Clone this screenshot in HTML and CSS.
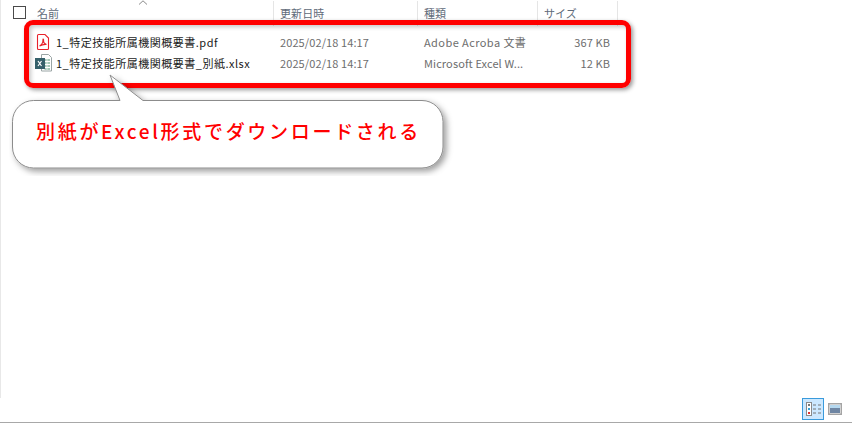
FILE: index.html
```html
<!DOCTYPE html>
<html lang="ja">
<head>
<meta charset="utf-8">
<title>エクスプローラー</title>
<link rel="stylesheet" href="styles.css">
</head>
<body>
<div class="window">
  <div class="pane">
    <div class="header">
      <div class="hcell name"><span class="check"></span><span class="hname">名前</span></div>
      <div class="hcell">更新日時</div>
      <div class="hcell">種類</div>
      <div class="hcell">サイズ</div>
    </div>
    <div class="rows">
      <div class="row">
        <div class="fname">
          <svg class="ico" width="17" height="18" viewBox="0 0 17 18"><path d="M3.500 1.500h6.500l3.500 3.500v10.500a1 1 0 0 1-1 1h-9a1 1 0 0 1-1-1v-13a1 1 0 0 1 1-1z" fill="#fff" stroke="#e8212b" stroke-width="1.100"/><path d="M4.500 13c2-1 3.500-3.500 3.500-6.500 0-1.200 1 0 .5 1.500 0 1.500 1.500 3 3 3.500-2-.3-4.500.2-7 1.500z" fill="none" stroke="#e8212b" stroke-width="1.100"/></svg>
          <span class="ftext">1_特定技能所属機関概要書.pdf</span>
        </div>
        <div class="meta">2025/02/18 14:17</div>
        <div class="meta wide">Adobe Acroba 文書</div>
        <div class="meta size">367 KB</div>
      </div>
      <div class="row">
        <div class="fname">
          <svg class="ico" width="17" height="18" viewBox="0 0 17 18"><path d="M6.500 .5h7l3 3v13.500h-10z" fill="#fff" stroke="#9aa5a5"/><path d="M9.500 6h5.500M9.500 9h5.500M9.500 12h5.500M9.500 15h5.500" stroke="#86b8a0" stroke-width="1.500"/><path d="M12 5v11" stroke="#fff" stroke-width=".7"/><rect x="0" y="4" width="10" height="11" fill="#35606a"/><path d="M3 7l3.500 5M6.500 7l-3.500 5" stroke="#fff" stroke-width="1.200"/></svg>
          <span class="ftext">1_特定技能所属機関概要書_別紙.xlsx</span>
        </div>
        <div class="meta">2025/02/18 14:17</div>
        <div class="meta">Microsoft Excel W...</div>
        <div class="meta size">12 KB</div>
      </div>
    </div>
  </div>
  <div class="footer">
    <span class="view active">
      <svg width="20" height="20" viewBox="0 0 20 20"><rect x="3.500" y="3.500" width="5" height="13" fill="#fff" stroke="#8a8a8a"/><rect x="5" y="5" width="2" height="2" fill="#777"/><rect x="5" y="9" width="2" height="2" fill="#33a3d8"/><rect x="5" y="13" width="2" height="2" fill="#e03030"/><path d="M10 6h3M15 6h3M10 10h3M15 10h3M10 14h3M15 14h3" stroke="#777"/></svg>
    </span>
    <span class="view plain">
      <svg width="14" height="12" viewBox="0 0 14 12"><rect x=".75" y=".75" width="12.500" height="10.500" fill="#fff" stroke="#a4a4a4" stroke-width="1.500"/><rect x="2" y="2" width="10" height="3" fill="#b5d8ef"/><rect x="2" y="5" width="10" height="5" fill="#6f86a3"/></svg>
    </span>
  </div>
  <svg class="sort" width="10" height="5" viewBox="0 0 10 5"><path d="M1 4.500 5 .8 9 4.500" fill="none" stroke="#8a8a8a" stroke-width="1"/></svg>
  <div class="highlight"></div>
  <svg class="callout" width="446" height="106" viewBox="0 0 446 106">
    <defs><filter id="sh" x="-5%" y="-10%" width="112%" height="130%"><feDropShadow dx="3" dy="3" stdDeviation="3" flood-color="#000" flood-opacity=".38"/></filter></defs>
    <path d="M24.500 30.500H111L101 5l33 25.500H413a21 21 0 0 1 21 21V77a21 21 0 0 1-21 21H24.500a21 21 0 0 1-21-21V51.500a21 21 0 0 1 21-21z" fill="#fff" stroke="#8c8c8c" filter="url(#sh)"/>
  </svg>
  <div class="bubble-text">別紙がExcel形式でダウンロードされる</div>
</div>
</body>
</html>
```
FILE: styles.css
```css
* { box-sizing: border-box; }
html, body { margin: 0; padding: 0; }
body {
  width: 852px;
  height: 423px;
  overflow: hidden;
  background: #fff;
  font-family: "Noto Sans CJK JP", "Noto Sans", sans-serif;
}
.window {
  position: relative;
  display: flex;
  flex-direction: column;
  width: 852px;
  height: 423px;
  border-bottom: 1px solid #a8a8a8;
}
.pane {
  height: 398px;
  border-left: 1px solid #e8e8e8;
}
.header {
  display: grid;
  grid-template-columns: 273px 144px 120px 80px;
  height: 25px;
}
.hcell {
  display: flex;
  align-items: center;
  padding: 0 0 2px 6px;
  height: 25px;
  margin-top: 1px;
  font-size: 11px;
  color: #5f6b7a;
  border-right: 1px solid #e5e5e5;
  letter-spacing: .1px;
}
.hcell.name { padding-left: 12px; }
.check {
  width: 13px;
  height: 13px;
  border: 1px solid #4a4a4a;
  margin-right: 11px;
}
.sort { position: absolute; left: 138px; top: 0; }
.rows {
  display: flex;
  flex-direction: column;
  padding-top: 7px;
}
.row {
  display: grid;
  grid-template-columns: 273px 144px 120px 80px;
  height: 20.5px;
  align-items: center;
  font-size: 11px;
}
.fname { display: flex; align-items: center; padding-left: 34px; color: #1a1a1a; }
.ico { flex: none; margin-right: 4px; }
.ftext { white-space: nowrap; letter-spacing: .5px; }
.meta { padding-left: 6px; color: #6d6d6d; white-space: nowrap; letter-spacing: .1px; }
.meta.wide { letter-spacing: .42px; }
.meta.size { text-align: right; padding-right: 8px; padding-left: 0; }
.highlight {
  position: absolute;
  left: 24px;
  top: 20px;
  width: 607px;
  height: 68px;
  border: 5px solid #ff0000;
  border-radius: 9px;
  box-shadow: 2px 2px 4px rgba(0,0,0,.4), inset 2px 2px 4px rgba(0,0,0,.22);
}
.callout { position: absolute; left: 9px; top: 70px; }
.bubble-text {
  position: absolute;
  left: 36px;
  top: 118px;
  font-size: 19px;
  font-weight: 500;
  line-height: 26px;
  color: #ff0000;
  letter-spacing: 2.7px;
  white-space: nowrap;
}
.footer {
  display: flex;
  align-items: flex-start;
  justify-content: flex-end;
  gap: 4px;
  height: 24px;
  padding-right: 10px;
}
.view { display: flex; align-items: center; justify-content: center; }
.view.active { width: 22px; height: 22px; background: #cce8ff; border: 1px solid #3a9bdc; }
.view.plain { width: 14px; height: 12px; margin-top: 5px; }
```
